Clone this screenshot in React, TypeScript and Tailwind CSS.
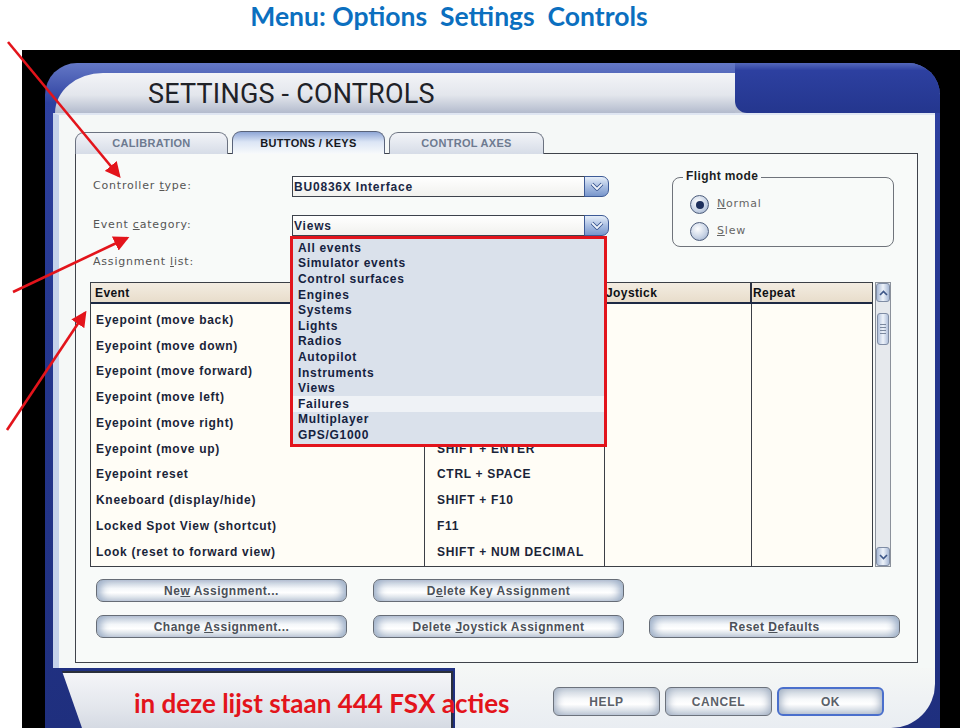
import React from 'react'

const rows: [string, string][] = [
  ['Eyepoint (move back)', 'CTRL + BACKSPACE'],
  ['Eyepoint (move down)', 'SHIFT + BACKSPACE'],
  ['Eyepoint (move forward)', 'CTRL + ENTER'],
  ['Eyepoint (move left)', 'CTRL + SHIFT + BACKSPACE'],
  ['Eyepoint (move right)', 'CTRL + SHIFT + ENTER'],
  ['Eyepoint (move up)', 'SHIFT + ENTER'],
  ['Eyepoint reset', 'CTRL + SPACE'],
  ['Kneeboard (display/hide)', 'SHIFT + F10'],
  ['Locked Spot View (shortcut)', 'F11'],
  ['Look (reset to forward view)', 'SHIFT + NUM DECIMAL'],
]

const categories = [
  'All events',
  'Simulator events',
  'Control surfaces',
  'Engines',
  'Systems',
  'Lights',
  'Radios',
  'Autopilot',
  'Instruments',
  'Views',
  'Failures',
  'Multiplayer',
  'GPS/G1000',
]

const Combo: React.FC<{ value: string; children?: React.ReactNode }> = ({ value, children }) => (
  <div className="relative flex h-[21px] w-[317px]">
    <div className="flex flex-1 items-center border border-[#3d424c] bg-[linear-gradient(to_bottom,#ffffff,#f1f1ee)] pl-[1px] text-[12px] font-bold tracking-[0.8px] text-[#1a2744]">
      {value}
    </div>
    <div className="-ml-px flex w-[25px] items-center justify-center rounded-r-[7px] border border-[#3d5a96] bg-[linear-gradient(to_bottom,#e6eef9,#a9bee2_50%,#7896cc)]">
      <svg width="14" height="10" viewBox="0 0 14 10">
        <path d="M2 2l5 5 5-5" fill="none" stroke="#34508c" strokeWidth="3.5" strokeLinejoin="round" />
        <path d="M2 2l5 5 5-5" fill="none" stroke="#eef3fb" strokeWidth="1.8" strokeLinejoin="round" />
      </svg>
    </div>
    {children}
  </div>
)

const Button: React.FC<{ children: React.ReactNode; className?: string }> = ({ children, className = '' }) => (
  <div
    className={`flex h-[23px] w-[251px] items-center justify-center rounded-[7px] border border-[#666c76] bg-[linear-gradient(to_bottom,#b7c3d4,#f4f7fa_40%,#ffffff_60%,#c3cdda)] text-[12px] font-bold tracking-[0.5px] text-[#4b5058] shadow-[inset_10px_0_8px_-6px_#9caec7,inset_-10px_0_8px_-6px_#9caec7] ${className}`}
  >
    <span>{children}</span>
  </div>
)

const Radio: React.FC<{ checked?: boolean; children: React.ReactNode }> = ({ checked, children }) => (
  <div className="flex h-[27px] items-center">
    <div className="flex h-[19px] w-[19px] items-center justify-center rounded-full border border-[#4d5d7c] bg-[radial-gradient(circle_at_40%_35%,#ffffff,#c5d1e4_60%,#8ea1c2)]">
      {checked && <div className="h-[8px] w-[8px] rounded-full bg-[#1d2f5c]" />}
    </div>
    <span className="ml-[8px] font-['DejaVu_Sans',sans-serif] text-[11px] tracking-[0.8px] text-[#666]">{children}</span>
  </div>
)

const ScrollBar: React.FC = () => (
  <div className="ml-[2px] flex h-[285px] w-[16px] flex-col border border-[#8b919b] bg-[#e6e9ed]">
    <div className="flex h-[19px] items-center justify-center rounded-[3px] border border-[#7f8ca4] bg-[linear-gradient(to_right,#a8b9d6,#eef3fa,#a8b9d6)]">
      <svg width="9" height="6" viewBox="0 0 9 6">
        <path d="M1 5l3.5-3.5L8 5" fill="none" stroke="#3d5688" strokeWidth="1.6" />
      </svg>
    </div>
    <div className="mx-[1px] mt-[11px] flex h-[32px] flex-col items-center justify-center gap-[2px] rounded-[3px] border border-[#7f8ca4] bg-[linear-gradient(to_right,#b3c2dc,#eef3fa,#b3c2dc)]">
      <div className="h-px w-[6px] bg-[#7a889e]" />
      <div className="h-px w-[6px] bg-[#7a889e]" />
      <div className="h-px w-[6px] bg-[#7a889e]" />
      <div className="h-px w-[6px] bg-[#7a889e]" />
    </div>
    <div className="flex-1" />
    <div className="flex h-[19px] items-center justify-center rounded-[3px] border border-[#7f8ca4] bg-[linear-gradient(to_right,#a8b9d6,#eef3fa,#a8b9d6)]">
      <svg width="9" height="6" viewBox="0 0 9 6">
        <path d="M1 1l3.5 3.5L8 1" fill="none" stroke="#3d5688" strokeWidth="1.6" />
      </svg>
    </div>
  </div>
)

const BottomButton: React.FC<{ children: React.ReactNode; ok?: boolean }> = ({ children, ok }) => (
  <div
    className={`flex h-[29px] w-[107px] items-center justify-center rounded-[6px] bg-[linear-gradient(to_bottom,#c3ccd8,#f6f8fa_40%,#ffffff_60%,#c0cad7)] text-[12px] font-bold tracking-[0.6px] text-[#5b6068] shadow-[inset_8px_0_8px_-6px_#9eacc0,inset_-8px_0_8px_-6px_#9eacc0] ${ok ? 'border-2 border-[#4a6fcc]' : 'border border-[#6c727c]'}`}
  >
    {children}
  </div>
)

const Arrows: React.FC = () => (
  <svg className="pointer-events-none absolute left-0 top-0 z-20" width="960" height="728">
    <defs>
      <marker id="ah" markerWidth="6" markerHeight="6" refX="5" refY="3" orient="auto" markerUnits="strokeWidth">
        <path d="M0 0L6 3L0 6z" fill="#e3141b" />
      </marker>
    </defs>
    <line x1="8" y1="42" x2="119" y2="176" stroke="#e3141b" strokeWidth="2.6" markerEnd="url(#ah)" />
    <line x1="13" y1="292" x2="127" y2="238" stroke="#e3141b" strokeWidth="2.6" markerEnd="url(#ah)" />
    <line x1="7" y1="430" x2="85" y2="313" stroke="#e3141b" strokeWidth="2.6" markerEnd="url(#ah)" />
  </svg>
)

export default function App() {
  return (
    <div className="relative h-[728px] w-[960px] overflow-hidden bg-white font-['Liberation_Sans',Arial,sans-serif]">
      {/* slide title */}
      <div className="flex h-[50px] justify-center pr-[62px]">
        <h1 className="whitespace-pre font-['Lato',sans-serif] text-[26.5px] font-bold leading-[32px] text-[#0b6fbf]">
          {'Menu: Options  Settings  Controls'}
        </h1>
      </div>

      {/* screenshot */}
      <div className="ml-[22px] h-[678px] bg-black pl-[23px] pt-[13px]">
        <div className="flex h-[665px] w-[895px] flex-col overflow-hidden rounded-t-[32px] bg-[linear-gradient(to_bottom,#6478c6,#2e41a0_6%,#25378f_40%,#1f2f7e)]">
          {/* title strip */}
          <div className="flex h-[50px] items-end">
            <div className="ml-[10px] flex h-[40px] w-[680px] items-center rounded-tl-[48px_40px] bg-[linear-gradient(to_bottom,#f3f4f7,#e3e6ec_55%,#b3bbcd)] pl-[93px] pt-[3px]">
              <span className="font-['Roboto',sans-serif] text-[27px] leading-none tracking-[0.2px] text-[#1f2228]">
                SETTINGS - CONTROLS
              </span>
            </div>
            <div className="h-full flex-1 bg-[linear-gradient(to_bottom,transparent_30px,#b9c0d0_30px)]">
              <div className="h-full rounded-bl-[12px] bg-[linear-gradient(to_bottom,#5468bb,#2d40a0_15%,#24368e)]" />
            </div>
          </div>

          {/* body */}
          <div className="ml-[8px] mr-[5px] h-[555px] border-l-[6px] border-t-2 border-l-[#c5d2ea] border-t-[#dfe6f2] bg-[#f5f8f7] pl-[16px] pt-[17px]">
            {/* tabs */}
            <div className="flex h-[22px] items-end gap-[4px]">
              <div className="flex h-[22px] w-[153px] items-center justify-center rounded-t-[9px] border border-b-0 border-[#6b7280] bg-[linear-gradient(to_bottom,#f2f4f8,#d6dce7)] text-[11px] font-bold tracking-[0.3px] text-[#6d7a90]">
                CALIBRATION
              </div>
              <div className="relative z-10 flex h-[23px] w-[153px] items-center justify-center rounded-t-[9px] border border-b-0 border-[#59637a] bg-[linear-gradient(to_bottom,#8ea6d6,#dbe5f5_45%,#f8fafb)] text-[11px] font-bold tracking-[0.3px] text-[#16181d]">
                BUTTONS / KEYS
              </div>
              <div className="flex h-[22px] w-[155px] items-center justify-center rounded-t-[9px] border border-b-0 border-[#6b7280] bg-[linear-gradient(to_bottom,#f2f4f8,#d6dce7)] text-[11px] font-bold tracking-[0.3px] text-[#6d7a90]">
                CONTROL AXES
              </div>
            </div>

            {/* content frame */}
            <div className="-mt-px h-[510px] w-[843px] border border-[#3f434b] bg-[#f8faf9]">
              <div className="flex pl-[17px] pt-[22px]">
                <div className="flex w-[516px] flex-col">
                  <div className="flex h-[21px] items-center">
                    <span className="w-[199px] font-['DejaVu_Sans',sans-serif] text-[11px] tracking-[0.8px] text-[#555]">
                      Controller <span className="underline">t</span>ype:
                    </span>
                    <Combo value="BU0836X Interface" />
                  </div>
                  <div className="mt-[18px] flex h-[21px] items-center">
                    <span className="w-[199px] font-['DejaVu_Sans',sans-serif] text-[11px] tracking-[0.8px] text-[#555]">
                      Event <span className="underline">c</span>ategory:
                    </span>
                    <Combo value="Views">
                      <div className="absolute left-[-2px] top-[21px] z-30 w-[317px] border-[3px] border-[#e2141c] bg-[#dae1eb] py-px">
                        {categories.map((c) => (
                          <div
                            key={c}
                            className={`flex h-[15.6px] items-center pl-[5px] text-[12px] font-bold tracking-[0.7px] text-[#15223f] ${c === 'Failures' ? 'bg-[#eff2f6]' : ''}`}
                          >
                            {c}
                          </div>
                        ))}
                      </div>
                    </Combo>
                  </div>
                  <div className="mt-[19px] h-[14px] font-['DejaVu_Sans',sans-serif] text-[11px] leading-[14px] tracking-[0.8px] text-[#555]">
                    Assignment <span className="underline">l</span>ist:
                  </div>
                </div>

                {/* flight mode */}
                <div className="relative ml-[63px] mt-[1px] h-[70px] w-[222px] rounded-[8px] border border-[#6f737b] pl-[17px] pt-[13px]">
                  <span className="absolute left-[10px] top-[-11px] bg-[#f8faf9] px-[3px] text-[12px] font-bold tracking-[0.4px] text-[#1b1d22]">
                    Flight mode
                  </span>
                  <Radio checked>
                    <span className="underline">N</span>ormal
                  </Radio>
                  <Radio>
                    <span className="underline">S</span>lew
                  </Radio>
                </div>
              </div>

              {/* assignment table */}
              <div className="ml-[14px] mt-[13px] flex">
                <div className="flex h-[285px] w-[783px] flex-col border border-[#3b3f46] bg-[#fffdf6]">
                  <div className="grid h-[21px] grid-cols-[334px_180px_147px_120px] border-b-2 border-[#1e2a44] bg-[linear-gradient(to_bottom,#f3ece1,#e8ddcb)] text-[12px] font-bold tracking-[0.4px] text-[#0f1115]">
                    <div className="flex items-center border-r-2 border-[#2b3040] pl-[4px]">Event</div>
                    <div className="flex items-center border-r-2 border-[#2b3040] pl-[4px]">Key</div>
                    <div className="flex items-center border-r-2 border-[#2b3040] pl-[1px]">Joystick</div>
                    <div className="flex items-center pl-[1px]">Repeat</div>
                  </div>
                  <div className="grid flex-1 grid-cols-[334px_180px_147px_120px] text-[12px] font-bold tracking-[0.7px] text-[#1a2438]">
                    <div className="border-r border-[#3b3f46] pt-[3px]">
                      {rows.map(([e]) => (
                        <div key={e} className="flex h-[25.75px] items-center pl-[5px]">
                          {e}
                        </div>
                      ))}
                    </div>
                    <div className="border-r border-[#3b3f46] pt-[3px]">
                      {rows.map(([e, k]) => (
                        <div key={e} className="flex h-[25.75px] items-center pl-[12px]">
                          {k}
                        </div>
                      ))}
                    </div>
                    <div className="border-r border-[#3b3f46]" />
                    <div />
                  </div>
                </div>
                <ScrollBar />
              </div>

              {/* buttons */}
              <div className="ml-[20px] mt-[12px] flex gap-[26px]">
                <Button>
                  Ne<span className="underline">w</span> Assignment...
                </Button>
                <Button>
                  D<span className="underline">e</span>lete Key Assignment
                </Button>
              </div>
              <div className="ml-[20px] mt-[13px] flex gap-[26px]">
                <Button>
                  Change <span className="underline">A</span>ssignment...
                </Button>
                <Button>
                  Delete <span className="underline">J</span>oystick Assignment
                </Button>
                <Button className="-ml-px">
                  Reset <span className="underline">D</span>efaults
                </Button>
              </div>
            </div>
          </div>

          {/* bottom row */}
          <div className="flex h-[60px]">
            <div className="w-[410px] pl-[17px] pt-[3px]">
              <div className="h-[57px] w-[391px] border-r-2 border-t-2 border-[#2a2f3b] bg-[linear-gradient(to_bottom,#f4f5f8,#e4e7ed_60%,#d5dae3)] [clip-path:polygon(0_0,100%_0,100%_100%,20px_100%)]" />
            </div>
            <div className="mr-[5px] flex flex-1 gap-[5px] rounded-br-[44px] bg-[linear-gradient(to_bottom,#f5f7f6,#e9edf2)] pl-[98px] pt-[19px]">
              <BottomButton>HELP</BottomButton>
              <BottomButton>CANCEL</BottomButton>
              <BottomButton ok>OK</BottomButton>
            </div>
          </div>
        </div>
      </div>

      {/* annotations */}
      <div className="absolute left-[134px] top-[687px] z-20 font-['Lato',sans-serif] text-[26px] font-bold leading-[32px] text-[#e3141b]">
        in deze lijst staan 444 FSX acties
      </div>
      <Arrows />
    </div>
  )
}
